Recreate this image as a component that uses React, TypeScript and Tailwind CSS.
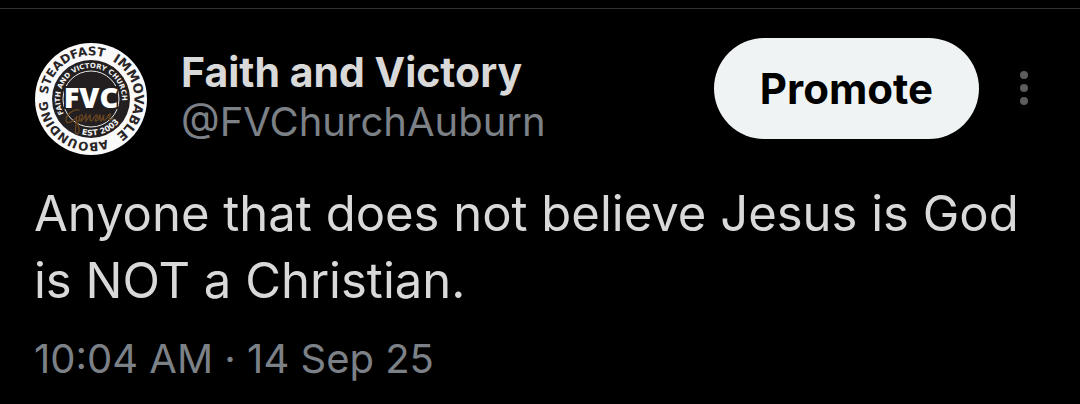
function Avatar() {
  return (
    <svg viewBox="0 0 112 112" className="size-28 shrink-0" role="img" aria-label="Faith and Victory Church logo">
      <defs>
        <path id="outer-ring" d="M12.7 51.5A43.5 43.5 0 1 1 99.3 60.5A43.5 43.5 0 1 1 12.7 51.5" />
        <path id="inner-ring" d="M29.2 71.5A31 31 0 1 1 84.1 69.1" />
        <path id="est-ring" d="M44.7 90.7A36.5 36.5 0 0 0 90.3 68.5" />
      </defs>
      <circle cx="56" cy="56" r="56" fill="#fafafa" />
      <circle cx="56" cy="56" r="39" fill="#231f20" />
      <circle cx="56" cy="56" r="28" fill="none" stroke="#e8e8e8" strokeWidth="1" />
      <g fontFamily="'DejaVu Sans', sans-serif" fontWeight="700">
        <text fontSize="12" fill="#2a2627">
          <textPath href="#outer-ring" startOffset="0">STEADFAST</textPath>
        </text>
        <text fontSize="13" fill="#2a2627">
          <textPath href="#outer-ring" startOffset="86">IMMOVABLE</textPath>
        </text>
        <text fontSize="12" fill="#2a2627">
          <textPath href="#outer-ring" startOffset="184">ABOUNDING</textPath>
        </text>
        <text fontSize="7" fill="#f2f2f2">
          <textPath href="#inner-ring" startOffset="1">FAITH AND VICTORY CHURCH</textPath>
        </text>
        <text fontSize="8" fill="#f2f2f2">
          <textPath href="#est-ring" startOffset="2">EST 2003</textPath>
        </text>
      </g>
      <rect x="29" y="43" width="54" height="23" fill="#231f20" />
      <text x="56" y="65" fontSize="29" fontWeight="800" fontFamily="'Open Sans', sans-serif" textAnchor="middle" fill="#fff">FVC</text>
      <g fill="none" stroke="#69451f" strokeWidth="1.3" strokeLinecap="round">
        <path d="M44 67c-5-2-13 5-13 10s8 2 11-4c-1 9-3 19 0 18s3-8-1-13" />
        <path d="M43 78c4 0 6-7 3-6s-2 7 1 6l4-6 0 6 4-6c1 0-1 6 1 6s4-7 6-6-4 6-1 6 3-6 4-6-1 6 1 6l3-6c-1 4-1 6 1 5s3-6 5-6-4 6 1 6l2-2" />
      </g>
    </svg>
  );
}

export default function App() {
  return (
    <main className="min-h-screen bg-black pt-2 font-['Inter','Liberation_Sans',sans-serif] text-[#d9d9d9]">
      <article className="border-t border-[#2f3336] pr-[44px] pl-[34px] pt-[29px]">
        <header className="flex items-start">
          <div className="pt-[5px] pl-px">
            <Avatar />
          </div>
          <div className="min-w-0 flex-1 pt-[9px] pl-[34px] leading-[50px] whitespace-nowrap">
            <h1 className="text-[41px] font-bold">Faith and Victory</h1>
            <a href="#profile" className="block text-[40px] text-[#7c8187]">@FVChurchAuburn</a>
          </div>
          <button type="button" className="rounded-full bg-[#eff3f4] px-[46px] py-[25px] text-[42px] leading-[51px] font-bold text-black">
            Promote
          </button>
          <button type="button" aria-label="More options" className="ml-[33px] flex h-[100px] w-6 items-center justify-center">
            <svg viewBox="0 0 8 34" className="h-[34px] w-2" fill="#5c5c5c">
              <circle cx="4" cy="4" r="4" />
              <circle cx="4" cy="17" r="4" />
              <circle cx="4" cy="30" r="4" />
            </svg>
          </button>
        </header>
        <p className="pt-[25px] text-[49px] leading-[67px]">Anyone that does not believe Jesus is God is NOT a Christian.</p>
        <time dateTime="2025-09-14T10:04" className="block pt-5 text-[40px] leading-[50px] text-[#7c8187]">
          10:04 AM · 14 Sep 25
        </time>
      </article>
    </main>
  );
}
